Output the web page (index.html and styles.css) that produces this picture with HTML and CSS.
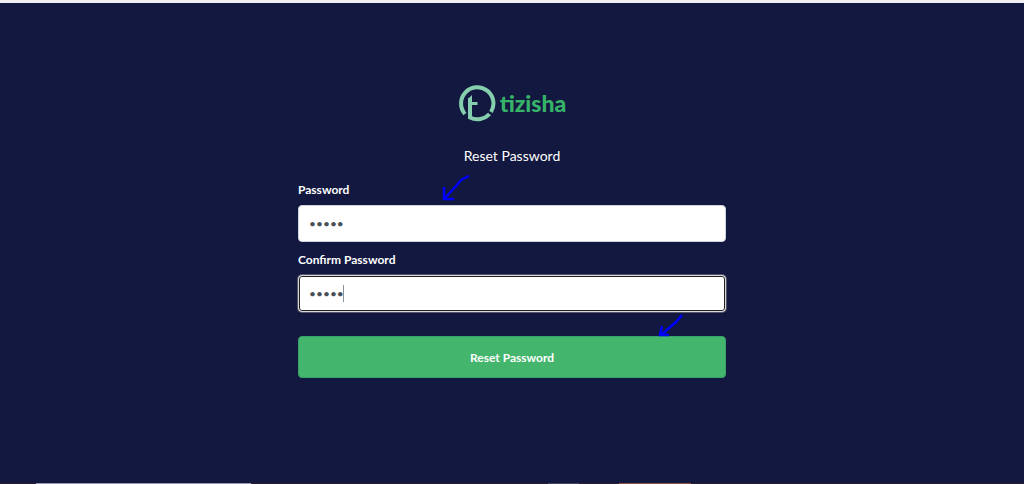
FILE: index.html
```html
<!DOCTYPE html>
<html lang="en">
<head>
    <meta charset="UTF-8">
    <meta name="viewport" content="width=device-width, initial-scale=1.0">
    <title>Reset Password</title>
    <link rel="stylesheet" href="styles.css">
</head>
<body>
    <main class="page">
        <form class="reset-form">
            <div class="logo">
                <svg class="logo-mark" viewBox="0 0 38 38" fill="none" stroke="#86cfae" stroke-width="4" aria-hidden="true">
                    <path d="M7 30A16.200 16.200 0 1 1 33 28"/>
                    <path d="M31.500 30A16.500 16.500 0 0 1 12 33.500V14"/>
                    <path d="M10 15L14 11V15Z" fill="#86cfae" stroke="none"/>
                    <path d="M12 19.500H19.500" stroke-width="3"/>
                </svg>
                <span class="logo-text">tizisha</span>
            </div>
            <h1>Reset Password</h1>

            <label for="password">Password</label>
            <div class="field">
                <input type="password" id="password" value="abcde">
                <svg class="arrow arrow-password" viewBox="0 0 28 28" aria-hidden="true">
                    <path d="M27 1L19 5L15 10L2 24M2 12V24H12"/>
                </svg>
            </div>

            <label for="confirm-password">Confirm Password</label>
            <div class="field">
                <input type="password" id="confirm-password" class="active" value="abcde">
                <span class="caret"></span>
            </div>

            <div class="submit">
                <button type="submit" class="btn">Reset Password</button>
                <svg class="arrow arrow-submit" viewBox="0 0 28 28" aria-hidden="true">
                    <path d="M24 3L18 10L3 23M4 14L2 23H11"/>
                </svg>
            </div>
        </form>
    </main>
    <div class="taskbar">
        <span class="task-search"></span>
        <span class="task-item"></span>
        <span class="task-app"></span>
    </div>
</body>
</html>
```

FILE: styles.css
```css
* {
    box-sizing: border-box;
}
body {
    margin: 0;
    min-height: 100vh;
    display: flex;
    flex-direction: column;
    background-color: #12183f;
    border-top: 3px solid #f1f1f4;
    color: #fff;
    font-family: Lato, sans-serif;
}
.page {
    flex: 1;
    display: flex;
    justify-content: center;
    padding: 81px 16px 0;
}
.reset-form {
    width: 100%;
    max-width: 428px;
}
.logo {
    display: flex;
    justify-content: center;
    align-items: center;
    gap: 4px;
}
.logo-mark {
    width: 38px;
    height: 38px;
}
.logo-text {
    color: #36b368;
    font-size: 23px;
    font-weight: 900;
    line-height: 38px;
}
h1 {
    margin: 24px 0 14px;
    text-align: center;
    font-size: 14px;
    font-weight: 400;
    line-height: 20px;
}
label {
    display: block;
    margin-bottom: 5px;
    font-size: 12px;
    font-weight: 700;
    line-height: 20px;
}
.field {
    position: relative;
    margin-bottom: 8px;
}
input {
    display: block;
    width: 100%;
    height: 37px;
    padding: 0 10px;
    border: 1px solid #ced4da;
    border-radius: 4px;
    background-color: #fff;
    color: #495057;
    font-family: Lato, sans-serif;
    font-size: 12px;
    outline: none;
}
input.active {
    border-color: #d8d8dc;
    box-shadow: inset 0 0 0 1px #222, 0 0 0 1px #55566a;
}
.caret {
    position: absolute;
    left: 45px;
    top: 10px;
    width: 1px;
    height: 17px;
    background-color: #8b929a;
}
.submit {
    position: relative;
    margin-top: 24px;
}
.btn {
    display: block;
    width: 100%;
    height: 42px;
    border: 1px solid #38a169;
    border-radius: 4px;
    background-color: #43b56c;
    color: #fff;
    font-family: Lato, sans-serif;
    font-size: 12px;
    font-weight: 700;
    cursor: pointer;
}
.arrow {
    position: absolute;
    width: 28px;
    height: 28px;
    fill: none;
    stroke: #0000ff;
    stroke-width: 2.500;
}
.arrow-password {
    left: 144px;
    bottom: 39px;
}
.arrow-submit {
    right: 40px;
    bottom: 38px;
}
/* thin strip along the bottom edge */
.taskbar {
    display: flex;
    height: 1px;
    background-color: #251f30;
}
.task-search {
    width: 21%;
    margin-left: 3.5%;
    background-color: #9a97b5;
}
.task-item {
    width: 3%;
    margin-left: 29%;
    background-color: #47455c;
}
.task-app {
    width: 7%;
    margin-left: 4%;
    background-color: #92513f;
}
```
